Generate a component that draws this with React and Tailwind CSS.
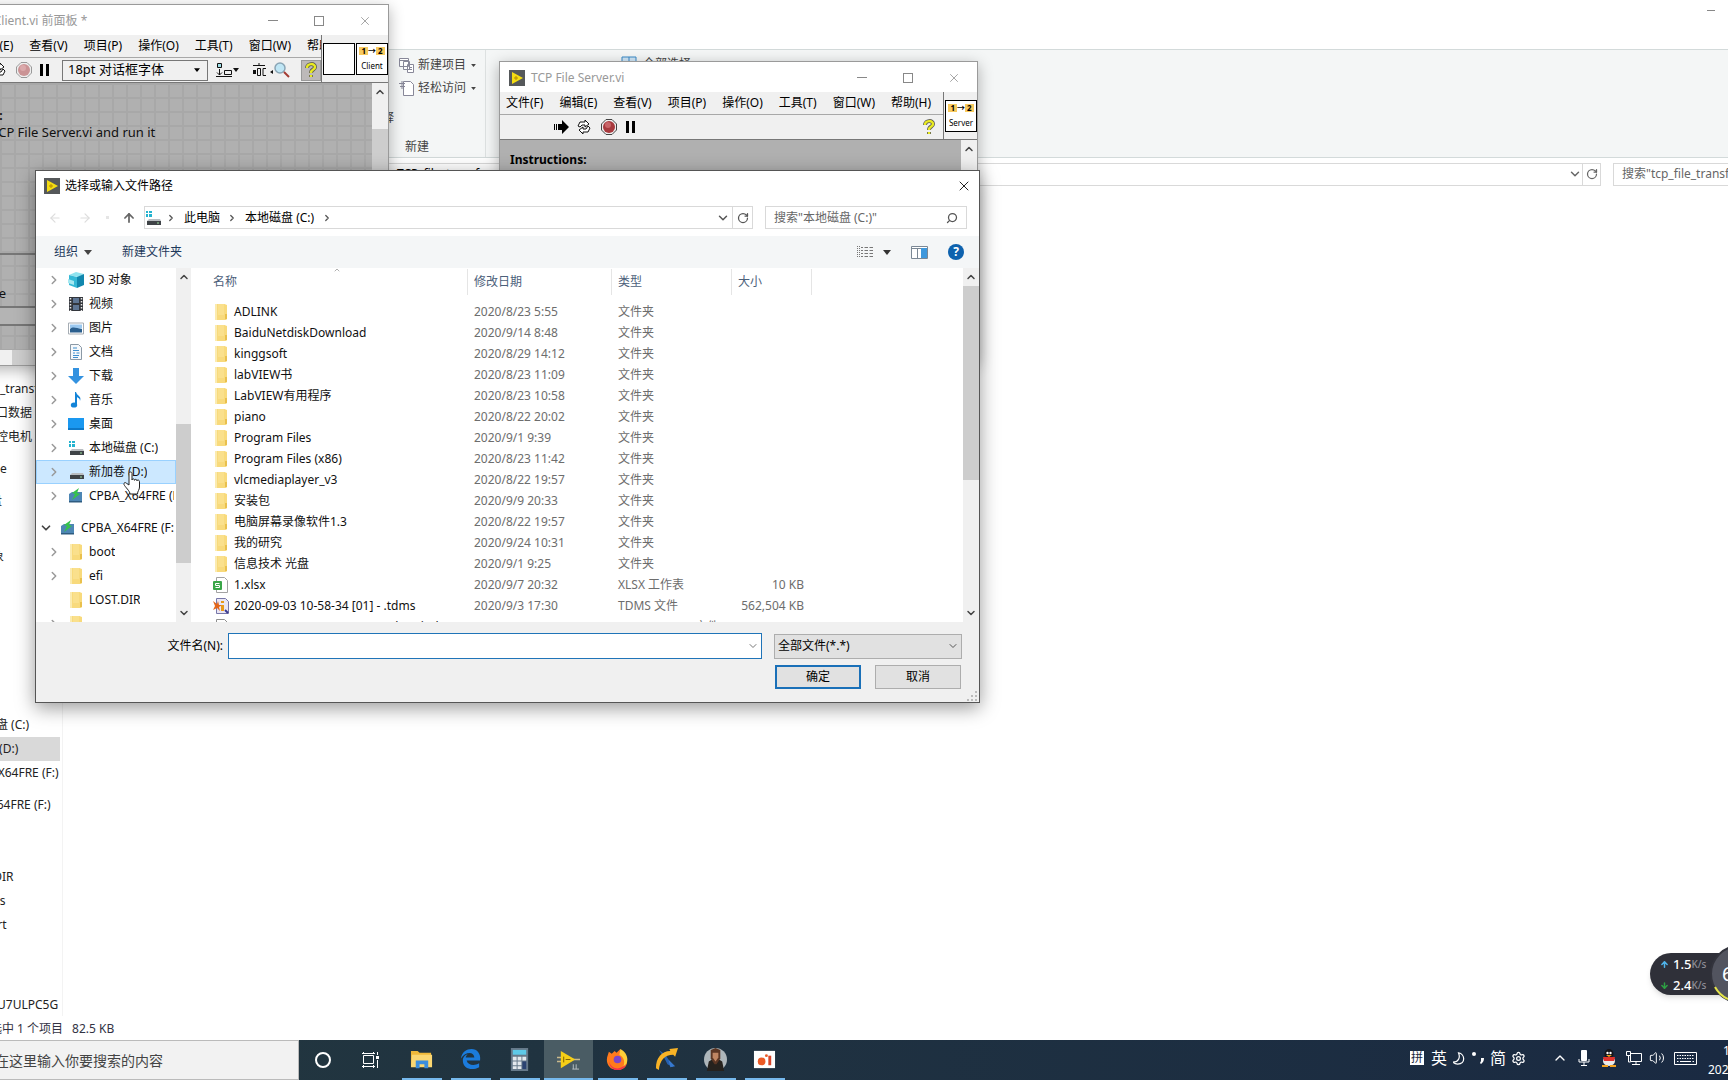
import React, { useState } from "react";
import clsx from "clsx";
import { ArrowLeft, ArrowRight, ArrowUp, ChevronDown, ChevronRight, ChevronUp, RotateCw, Search, Settings, Volume2, X } from "lucide-react";

const treeItems = [
  { label: "3D 对象", icon: "cube" },
  { label: "视频", icon: "video" },
  { label: "图片", icon: "picture" },
  { label: "文档", icon: "document" },
  { label: "下载", icon: "download" },
  { label: "音乐", icon: "music" },
  { label: "桌面", icon: "desktop" },
  { label: "本地磁盘 (C:)", icon: "system" },
  { label: "新加卷 (D:)", icon: "drive", selected: true },
  { label: "CPBA_X64FRE (F:)", icon: "usb" },
  { label: "CPBA_X64FRE (F:)", icon: "usb", root: true },
  { label: "boot", icon: "folder" },
  { label: "efi", icon: "folder" },
  { label: "LOST.DIR", icon: "folder", leaf: true },
  { label: "", icon: "folder" },
];

const files = [
  ["ADLINK", "2020/8/23 5:55"],
  ["BaiduNetdiskDownload", "2020/9/14 8:48"],
  ["kinggsoft", "2020/8/29 14:12"],
  ["labVIEW书", "2020/8/23 11:09"],
  ["LabVIEW有用程序", "2020/8/23 10:58"],
  ["piano", "2020/8/22 20:02"],
  ["Program Files", "2020/9/1 9:39"],
  ["Program Files (x86)", "2020/8/23 11:42"],
  ["vlcmediaplayer_v3", "2020/8/22 19:57"],
  ["安装包", "2020/9/9 20:33"],
  ["电脑屏幕录像软件1.3", "2020/8/22 19:57"],
  ["我的研究", "2020/9/24 10:31"],
  ["信息技术 光盘", "2020/9/1 9:25"],
  ["1.xlsx", "2020/9/7 20:32", "XLSX 工作表", "10 KB", "sheet"],
  ["2020-09-03 10-58-34 [01] - .tdms", "2020/9/3 17:30", "TDMS 文件", "562,504 KB", "tdms"],
  ["2020-09-03 10-58-34 [01] - .tdms_index", "2020/9/3 17:30", "TDMS_INDEX 文件", "1 KB", "file"],
];

const menus = ["文件(F)", "编辑(E)", "查看(V)", "项目(P)", "操作(O)", "工具(T)", "窗口(W)", "帮助(H)"];

function Caret({ className }) {
  return (
    <svg viewBox="0 0 8 5" className={clsx("shrink-0", className)} fill="currentColor" aria-hidden="true">
      <path d="M0 0h8L4 5z" />
    </svg>
  );
}

function Icon({ name }) {
  return (
    <svg viewBox="0 0 16 16" className="h-4 w-4 shrink-0" aria-hidden="true">
      {name === "folder" && (
        <>
          <path d="M2 0h9.500l2.500 1v14l-1 1H2z" fill="#f8da7c" />
          <path d="M2 0h2v16H2z" fill="#fbebb0" />
          <path d="M5 0h6v11H5z" fill="#fae08c" />
          <path d="M12 10h2v5h-2z" fill="#e9c04d" />
        </>
      )}
      {name === "cube" && (
        <>
          <path d="M8 0l8 2-6 3-9-2z" fill="#8fe3ef" />
          <path d="M1 3l8 2v11l-8-3z" fill="#35b9d6" />
          <path d="M9 5l7-3v11l-7 3z" fill="#1187ae" />
          <path d="M0 7l6 2v4l-6-2z" fill="#a5e8f1" />
        </>
      )}
      {name === "video" && (
        <>
          <path d="M1 1h14v14H1z" fill="#33363c" />
          <path d="M5 2h6v5H5zM5 9h6v5H5z" fill="#5f7694" />
          <path d="M2.500 2v13M13.500 2v13" stroke="#e8e8e8" strokeWidth="1.500" strokeDasharray="1.500 1.500" />
        </>
      )}
      {name === "picture" && (
        <>
          <path d="M.5 3h15v11H.5z" fill="#fff" stroke="#a6adb4" />
          <path d="M2 4.500h12v4H2z" fill="#9cc9f0" />
          <path d="M2 9c3-3 6-1 12 0v3.500H2z" fill="#2b5f8e" />
        </>
      )}
      {name === "document" && (
        <>
          <path d="M2.500.5h8l3 3v12h-11z" fill="#f5f8fb" stroke="#8b99a6" />
          <path d="M5 4h4M5 6.500h6M5 9h2M8.500 9h3M5 11.500h6M5 13.500h5" stroke="#3f8fce" />
        </>
      )}
      {name === "download" && <path d="M5 0h6v8h5l-8 8-8-8h5z" fill="#3392e0" />}
      {name === "music" && (
        <>
          <path d="M8 0c1 4 6 4 4 9 0-3-2-3-3-4v8H7V0z" fill="#1384d8" />
          <ellipse cx="6" cy="13" rx="3.200" ry="2.600" fill="#1384d8" />
        </>
      )}
      {name === "desktop" && (
        <>
          <path d="M0 2h16v12H0z" fill="#1a98f0" />
          <path d="M0 12h16v2H0z" fill="#0d78c8" />
        </>
      )}
      {name === "system" && <path d="M1 1h2v2H1zM4 1h3v2H4zM1 4h2v3H1zM4 4h3v3H4z" fill="#24b3cf" />}
      {(name === "system" || name === "drive") && (
        <>
          <path d="M4 9h11l1 2H2z" fill="#b9bdc1" />
          <path d="M2 11h14v4H2z" fill="#3f4347" />
          <path d="M12 13h2" stroke="#9fe3a0" />
        </>
      )}
      {name === "usb" && (
        <>
          <path d="M1 6l3-2h10v10H1z" fill="#4d86b4" />
          <path d="M1 13h13v1.500H1z" fill="#2f5c80" />
          <path d="M11 0L4 5l3 1-3 6 8-6-3-1z" fill="#36c24b" />
        </>
      )}
      {name === "sheet" && (
        <>
          <path d="M3.500.5h8l3 3v12h-11z" fill="#fff" stroke="#a3a3a3" />
          <rect y="4" width="9" height="9" rx="1" fill="#3aa648" />
          <path d="M6.500 6.500h-4v2h4v2h-4" fill="none" stroke="#fff" />
        </>
      )}
      {name === "tdms" && (
        <>
          <path d="M3.500.5h9l3 3v12h-12z" fill="#e9e6f5" stroke="#7777a8" />
          <path d="M0 3l4 3 1-3 1 4h3l-3 2 1 4-3-3-4 2 2-4z" fill="#e3661b" />
          <path d="M8 3h3v2H8zM8 7h3v6H8z" fill="#e89a1b" />
          <path d="M12 12l3 3" stroke="#3a3a90" strokeWidth="2" />
        </>
      )}
      {name === "file" && <path d="M3.500.5h8l3 3v12h-11z" fill="#fff" stroke="#8f8f8f" />}
    </svg>
  );
}

function LabviewLogo() {
  return (
    <svg viewBox="0 0 16 16" className="h-4 w-4 shrink-0" aria-hidden="true">
      <path d="M0 0h16v16H0z" fill="#55585a" />
      <path d="M3 2l11 6-11 6z" fill="#f4dc12" />
      <path d="M5 8h4M7 6v4" stroke="#b58a00" />
    </svg>
  );
}

function RunArrow() {
  return (
    <svg viewBox="0 0 16 14" className="h-[14px] w-4" aria-hidden="true">
      <path d="M.5 4v6M2.500 4v6" stroke="#000" />
      <path d="M4 4h4V0l7 7-7 7v-4H4z" fill="#000" />
    </svg>
  );
}

function RunLoop() {
  return (
    <svg viewBox="0 0 16 16" className="h-4 w-4" fill="#fff" stroke="#111" aria-hidden="true">
      <path d="M2 7l2-4h5V1l4 4-4 3V6H6L4 8z" />
      <path d="M14 9l-2 4H7v2l-4-4 4-3v2h3l2-3z" />
    </svg>
  );
}

function StopIcon({ faded }) {
  return (
    <svg viewBox="0 0 16 16" className={clsx("h-4 w-4", faded && "opacity-50")} aria-hidden="true">
      <path d="M5 .5h6L15.500 5v6L11 15.500H5L.5 11V5z" fill="#eee" stroke="#444" />
      <circle cx="8" cy="8" r="6" fill="#a8393d" />
      <circle cx="7" cy="6" r="3" fill="#c86468" />
    </svg>
  );
}

function PauseIcon() {
  return (
    <svg viewBox="0 0 10 12" className="h-3 w-[10px]" aria-hidden="true">
      <path d="M0 0h3v12H0zM6 0h3v12H6z" fill="#000" />
    </svg>
  );
}

function HelpIcon() {
  return (
    <svg viewBox="0 0 12 16" className="h-4 w-3" fill="none" aria-hidden="true">
      <path d="M2 6c0-5 8-5 8-1 0 3-4 2-4 6M6 13v2" stroke="#555" strokeWidth="4" />
      <path d="M2 6c0-5 8-5 8-1 0 3-4 2-4 6M6 13v2" stroke="#e9ea22" strokeWidth="2.500" />
    </svg>
  );
}

function AlignIcon() {
  return (
    <svg viewBox="0 0 24 14" className="h-[14px] w-6" fill="none" stroke="#111" aria-hidden="true">
      <path d="M1.500.5h4v4h-4z" fill="#9fe0e8" />
      <path d="M3.500 6v6M1 9.500l2.500 2.500L6 9.500M8.500 7.500h7v4h-7zM0 13.500h16" />
      <path d="M17 5h6l-3 4z" fill="#111" stroke="none" />
    </svg>
  );
}

function DistributeIcon() {
  return (
    <svg viewBox="0 0 22 14" className="h-[14px] w-[22px]" fill="none" stroke="#111" aria-hidden="true">
      <path d="M1 2.500h12M7 0v2M5.500 5.500h3v7h-3zM14 5.500h-3v7h3" />
      <path d="M1 7h3v4H1zM18 9l3-2v4z" fill="#111" stroke="none" />
    </svg>
  );
}

function Magnifier() {
  return (
    <svg viewBox="0 0 16 16" className="h-4 w-4" fill="none" aria-hidden="true">
      <circle cx="6" cy="6" r="5" fill="#bfe6f5" stroke="#8aa5b5" strokeWidth="1.500" />
      <path d="M10 10l5 5" stroke="#a33b33" strokeWidth="2" />
    </svg>
  );
}

function ViBadge({ label }) {
  return (
    <div className="flex h-8 w-8 shrink-0 flex-col items-center justify-around border border-black bg-white text-[8px] leading-none text-black">
      <div className="flex items-center font-bold">
        <span className="bg-[#f8ca5e] px-[2px]">1</span>
        <span>→</span>
        <span className="bg-[#f8ca5e] px-[2px]">2</span>
      </div>
      <span>{label}</span>
    </div>
  );
}

function ViWindow({ className, title, toolbar, badges, children }) {
  return (
    <section className={clsx("absolute flex flex-col border border-[#9a9a9a] bg-[#f0f0f0] shadow-[0_4px_14px_rgba(0,0,0,0.3)]", className)}>
      <div className="flex h-[30px] shrink-0 items-center bg-white pt-px pl-[9px] text-[#999]">
        <LabviewLogo />
        <span className="ml-[6px] flex-1 text-xs">{title}</span>
        <button className="flex w-[46px] justify-center" aria-label="最小化">
          <span className="h-px w-[10px] bg-[#888]" />
        </button>
        <button className="flex w-[46px] justify-center" aria-label="最大化">
          <span className="h-[10px] w-[10px] border border-[#888]" />
        </button>
        <button className="flex w-[46px] justify-center" aria-label="关闭">
          <X className="h-[14px] w-[14px]" strokeWidth={1.5} />
        </button>
      </div>
      <div className="flex h-12 shrink-0 border-b border-[#777]">
        <div className="flex min-w-0 flex-1 flex-col overflow-hidden border-r border-[#777]">
          <nav className="flex h-[23px] shrink-0 items-center gap-4 border-b border-[#a8a8a8] pl-[6px] text-black">
            {menus.map((m) => (
              <button key={m} className="shrink-0 whitespace-nowrap">{m}</button>
            ))}
          </nav>
          <div className="flex flex-1 items-center">{toolbar}</div>
        </div>
        <div className="flex items-center gap-px pl-px">{badges}</div>
      </div>
      {children}
    </section>
  );
}

function ClientWindow() {
  return (
    <ViWindow
      className="top-1 -left-[85px] h-[362px] w-[474px]"
      title="TCP File Client.vi 前面板 *"
      toolbar={
        <>
          <button className="ml-[75px]" aria-label="连续运行"><RunLoop /></button>
          <button className="ml-[9px]" aria-label="中止"><StopIcon faded /></button>
          <button className="ml-2" aria-label="暂停"><PauseIcon /></button>
          <div className="relative ml-3 flex items-center">
            <select aria-label="字体" className="h-[21px] w-[146px] appearance-none border border-[#777] bg-[#f0f0f0] pl-[5px] text-[13px]">
              <option>18pt 对话框字体</option>
            </select>
            <Caret className="pointer-events-none absolute right-2 h-1 w-[6px]" />
          </div>
          <button className="ml-2" aria-label="对齐"><AlignIcon /></button>
          <button className="ml-3" aria-label="分布"><DistributeIcon /></button>
          <button aria-label="查找"><Magnifier /></button>
          <button className="ml-auto flex h-[21px] w-5 items-center justify-center border border-[#999] bg-[#bdb9b9]" aria-label="帮助"><HelpIcon /></button>
        </>
      }
      badges={
        <>
          <div className="h-8 w-8 border border-black bg-white" />
          <ViBadge label="Client" />
        </>
      }
    >
      <div className="flex min-h-0 flex-1">
        <div className="flex flex-1 flex-col bg-[#b0b0b0] bg-[linear-gradient(#a8a8a8_2px,transparent_2px),linear-gradient(90deg,#a8a8a8_2px,transparent_2px)] bg-[size:14px_14px] text-[13px] text-[#111]">
          <div className="flex h-[172px] flex-col border-b-2 border-[#777] pt-6 pl-[10px] leading-[17px]">
            <p className="text-xs leading-[17px] font-bold">Instructions:</p>
            <p className="pl-[14px]">1. Open TCP File Server.vi and run it</p>
          </div>
          <div className="flex flex-1 flex-col justify-end gap-1">
            <label htmlFor="client-file" className="pl-[43px]">File size</label>
            <input id="client-file" className="mb-6 h-5 w-full border-y-2 border-[#777] bg-[#b4b4b4]" />
          </div>
          <div className="h-[15px] bg-[#f0f0f0]">
            <div className="ml-24 h-full w-60 bg-[#cdcdcd]" />
          </div>
        </div>
        <div className="flex w-4 flex-col items-center bg-[#f0f0f0]">
          <ChevronUp className="h-[18px] w-3 text-[#444]" strokeWidth={3} />
          <div className="mt-7 h-40 w-full bg-[#cdcdcd]" />
        </div>
      </div>
    </ViWindow>
  );
}

function ServerWindow() {
  return (
    <ViWindow
      className="top-[61px] left-[499px] h-[300px] w-[479px]"
      title="TCP File Server.vi"
      toolbar={
        <>
          <button className="ml-[54px]" aria-label="运行"><RunArrow /></button>
          <button className="ml-[6px]" aria-label="连续运行"><RunLoop /></button>
          <button className="ml-[9px]" aria-label="中止"><StopIcon /></button>
          <button className="ml-[9px]" aria-label="暂停"><PauseIcon /></button>
          <button className="mr-2 ml-auto" aria-label="帮助"><HelpIcon /></button>
        </>
      }
      badges={<ViBadge label="Server" />}
    >
      <div className="flex min-h-0 flex-1">
        <div className="flex-1 bg-[#b0b0b0] pt-[10px] pl-[10px] text-xs leading-5 font-bold text-black">Instructions:</div>
        <div className="flex w-4 flex-col items-center bg-[#f0f0f0]">
          <ChevronUp className="h-[18px] w-3 text-[#444]" strokeWidth={3} />
        </div>
      </div>
    </ViWindow>
  );
}

function ExplorerItem({ children, className }) {
  return <li className={clsx("flex h-6 items-center whitespace-nowrap", className)}>{children}</li>;
}

// Explorer window behind everything, its left part is off the screen
function ExplorerWindow() {
  return (
    <section className="flex min-h-0 flex-1 flex-col bg-white">
      <div className="flex h-[49px] justify-end pt-[10px] pr-[13px]">
        <span className="h-px w-2 bg-[#888]" />
      </div>
      <div className="flex h-[109px] border-y border-[#d3dada] bg-[#f4f6f6] text-[#444]">
        <div className="flex w-[394px] flex-col items-end justify-center pt-7"><span>注释</span></div>
        <div className="flex w-[92px] flex-col gap-[7px] border-r border-[#dde1e1] pt-[7px] pl-[5px]">
          <button className="flex h-4 items-center gap-[3px] whitespace-nowrap">
            <svg viewBox="0 0 16 16" className="h-4 w-4" fill="#fff" stroke="#889" aria-hidden="true">
              <path d="M.5 1.500h9v8h-9zM.5 3.500h9M4.500 4.500h6v8h-6zM8.500 7.500h6v8h-6zM10 10.500h3M10 12.500h3" />
            </svg>
            新建项目
            <Caret className="ml-[2px] h-[3px] w-[5px]" />
          </button>
          <button className="flex h-4 items-center gap-[3px] whitespace-nowrap">
            <svg viewBox="0 0 16 16" className="h-4 w-4" fill="#fff" stroke="#889" aria-hidden="true">
              <path d="M4.500 1.500h7l3 3v11h-10zM0 3.500h6M1 6.500h5M3 1v8" />
            </svg>
            轻松访问
            <Caret className="ml-[2px] h-[3px] w-[5px]" />
          </button>
          <span className="mt-9 pl-[6px]">新建</span>
        </div>
        <div className="flex h-7 items-center gap-[6px] pl-[135px]">
          <svg viewBox="0 0 16 16" className="h-4 w-4" aria-hidden="true">
            <path d="M1 1h14v14H1zM8 1v14M1 8h14" fill="#cfe6f7" stroke="#3a8ac8" />
          </svg>
          全部选择
        </div>
      </div>
      <div className="flex h-8 items-center text-[#666]">
        <div className="flex h-[23px] flex-1 items-center border border-[#d9d9d9] pl-[396px] text-black">
          <span className="flex-1">TCP_file_transf</span>
          <ChevronDown className="h-[14px] w-[14px] text-[#666]" strokeWidth={2.5} />
          <button className="flex h-full w-[18px] items-center justify-center border-l border-[#d9d9d9] text-[#666]" aria-label="刷新">
            <RotateCw className="h-3 w-3" strokeWidth={2.5} />
          </button>
        </div>
        <div className="ml-3 flex h-[23px] w-[115px] items-center overflow-hidden border border-r-0 border-[#d9d9d9] pl-2 whitespace-nowrap">
          搜索"tcp_file_transfer"
        </div>
      </div>
      <div className="flex min-h-0 flex-1">
        <ul className="w-[63px] overflow-hidden border-r border-[#f3f3f3] pt-[187px] text-[#222]">
          <ExplorerItem>_transfer</ExplorerItem>
          <ExplorerItem className="-ml-[4px]">口数据</ExplorerItem>
          <ExplorerItem className="-ml-[4px]">控电机</ExplorerItem>
          <ExplorerItem className="mt-2">e</ExplorerItem>
          <ExplorerItem className="mt-2 -ml-[10px]">盘</ExplorerItem>
          <ExplorerItem className="mt-8 -ml-[8px]">象</ExplorerItem>
          <ExplorerItem className="mt-36 -ml-10">本地磁盘 (C:)</ExplorerItem>
          <ExplorerItem className="mr-[2px] bg-[#d9d9d9]"><span className="-ml-10">新加卷 (D:)</span></ExplorerItem>
          <ExplorerItem className="-ml-[38px]">CPBA_X64FRE (F:)</ExplorerItem>
          <ExplorerItem className="mt-2 -ml-[46px]">CPBA_X64FRE (F:)</ExplorerItem>
          <ExplorerItem className="mt-12 -ml-[38px]">LOST.DIR</ExplorerItem>
          <ExplorerItem className="-ml-[38px]">sources</ExplorerItem>
          <ExplorerItem className="-ml-[38px]">support</ExplorerItem>
          <ExplorerItem className="mt-14 -ml-[3px]">U7ULPC5G</ExplorerItem>
        </ul>
      </div>
      <div className="-ml-[10px] flex h-6 items-center gap-[9px] pt-[2px] text-[#334]">
        <span>选中 1 个项目</span>
        <span>82.5 KB</span>
      </div>
    </section>
  );
}

function TreeRow({ item }) {
  return (
    <li
      className={clsx(
        "flex h-6 items-center border whitespace-nowrap text-[#111]",
        item.selected ? "border-[#99d1ff] bg-[#cce8ff]" : "border-transparent",
        item.root ? "mt-2 pl-px" : "pl-[9px]"
      )}
    >
      <span className="flex w-4 shrink-0 justify-center text-[#999]">
        {item.root ? <ChevronDown className="h-[14px] w-[14px] text-[#444]" strokeWidth={3} /> : !item.leaf && <ChevronRight className="h-[14px] w-[14px]" strokeWidth={2.5} />}
      </span>
      <span className="ml-[6px] flex"><Icon name={item.icon} /></span>
      <span className="mr-px ml-[5px] min-w-0 overflow-hidden">{item.label}</span>
    </li>
  );
}

function FileDialog() {
  const [fileName, setFileName] = useState("");

  return (
    <section className="absolute top-[170px] left-[35px] flex w-[945px] flex-col border border-[#555] bg-white shadow-[0_5px_18px_rgba(0,0,0,0.4)]">
      <div className="flex h-7 items-center pt-px pl-2 text-black">
        <LabviewLogo />
        <h1 className="ml-[5px] flex-1">选择或输入文件路径</h1>
        <button className="flex w-[31px] justify-center" aria-label="关闭">
          <X className="h-4 w-4" strokeWidth={1.3} />
        </button>
      </div>

      {/* Address bar */}
      <div className="flex h-[37px] items-center pr-3 text-[#555]">
        <button className="ml-3" aria-label="后退"><ArrowLeft className="h-[14px] w-[14px] text-[#ddd]" /></button>
        <button className="ml-4" aria-label="前进"><ArrowRight className="h-[14px] w-[14px] text-[#ddd]" /></button>
        <span className="ml-[14px] h-[3px] w-[3px] bg-[#e5e5e5]" />
        <button className="ml-[13px]" aria-label="上移"><ArrowUp className="h-[14px] w-[14px] text-[#666]" strokeWidth={3} /></button>
        <div className="ml-2 flex h-[23px] flex-1 items-center border border-[#d9d9d9] text-black">
          <span className="flex"><Icon name="system" /></span>
          <ChevronRight className="ml-[5px] h-[10px] w-[10px] text-[#555]" strokeWidth={3} />
          <span className="ml-2">此电脑</span>
          <ChevronRight className="ml-[7px] h-[10px] w-[10px] text-[#555]" strokeWidth={3} />
          <span className="ml-2">本地磁盘 (C:)</span>
          <ChevronRight className="ml-2 h-[10px] w-[10px] text-[#555]" strokeWidth={3} />
          <ChevronDown className="mr-[2px] ml-auto h-[14px] w-[14px] text-[#555]" strokeWidth={2.5} />
          <button className="flex h-full w-5 items-center justify-center border-l border-[#d9d9d9] text-[#555]" aria-label="刷新">
            <RotateCw className="h-3 w-3" strokeWidth={2.5} />
          </button>
        </div>
        <div className="ml-3 flex h-[23px] w-[202px] items-center border border-[#d9d9d9] pr-2 pl-2">
          <input aria-label="搜索" placeholder={'搜索"本地磁盘 (C:)"'} className="min-w-0 flex-1 outline-none placeholder:text-[#666]" />
          <Search className="h-3 w-3 -scale-x-100" strokeWidth={2.5} />
        </div>
      </div>

      {/* Command bar */}
      <div className="flex h-8 items-center bg-[#f4f6f7] pr-[15px] pl-[18px] text-[#1e395b]">
        <button className="flex items-center gap-[6px]">组织 <Caret className="h-[5px] w-2 text-[#444]" /></button>
        <button className="ml-[30px]">新建文件夹</button>
        <button className="ml-auto flex items-center gap-[10px]" aria-label="更改视图">
          <svg viewBox="0 0 16 12" className="h-3 w-4" stroke="#777" aria-hidden="true">
            <path d="M.5 0v12M2.500 0v12" strokeDasharray="1 1" />
            <path d="M4 1.500h2M7.500 1.500h3.500M12.500 1.500H16M4 4.500h2M7.500 4.500h3.500M12.500 4.500H16M4 7.500h2M7.500 7.500h3.500M12.500 7.500H16M4 10.500h2M7.500 10.500h3.500M12.500 10.500H16" />
          </svg>
          <Caret className="h-[5px] w-2 text-[#333]" />
        </button>
        <button className="ml-5" aria-label="预览窗格">
          <svg viewBox="0 0 17 13" className="h-[13px] w-[17px]" aria-hidden="true">
            <path d="M.5.5h16v12H.5zM.5 2.500h16M6.500 2v10" fill="#fff" stroke="#7b8895" />
            <path d="M10 2h6v10h-6z" fill="#3f98dc" />
          </svg>
        </button>
        <button className="ml-5 flex h-4 w-4 items-center justify-center rounded-full bg-[#0e62ae] font-bold text-white" aria-label="帮助">?</button>
      </div>

      <div className="flex h-[354px]">
        <ul className="w-[140px] overflow-hidden">
          {treeItems.map((item, i) => (
            <TreeRow key={i} item={item} />
          ))}
        </ul>
        <div className="flex w-[15px] flex-col items-center bg-[#f0f0f0]">
          <ChevronUp className="h-[18px] w-3 text-[#444]" strokeWidth={3} />
          <div className="mt-[138px] h-[139px] w-full bg-[#cdcdcd]" />
          <ChevronDown className="mt-auto h-[18px] w-3 text-[#444]" strokeWidth={3} />
        </div>
        <div className="relative ml-[14px] flex-1 overflow-hidden pt-px">
          <ChevronUp className="absolute -top-[2px] left-[127px] h-2 w-[10px] text-[#888]" />
          <table className="table-fixed border-collapse whitespace-nowrap text-[#6d6d6d]">
            <thead>
              <tr className="h-8 text-left align-top text-[#4c607a]">
                <th className="w-[263px] p-0 font-normal"><div className="h-[26px] border-r border-[#e5e5e5] pl-2 leading-[26px]">名称</div></th>
                <th className="w-36 p-0 font-normal"><div className="h-[26px] border-r border-[#e5e5e5] pl-[6px] leading-[26px]">修改日期</div></th>
                <th className="w-[120px] p-0 font-normal"><div className="h-[26px] border-r border-[#e5e5e5] pl-[6px] leading-[26px]">类型</div></th>
                <th className="w-20 p-0 font-normal"><div className="h-[26px] border-r border-[#e5e5e5] pl-[6px] leading-[26px]">大小</div></th>
              </tr>
            </thead>
            <tbody>
              {files.map(([name, date, type = "文件夹", size = "", icon = "folder"]) => (
                <tr key={name} className="h-[21px]">
                  <td className="p-0 pl-2">
                    <div className="flex items-center gap-[5px] text-[#111]"><Icon name={icon} />{name}</div>
                  </td>
                  <td className="p-0 pl-[6px]">{date}</td>
                  <td className="p-0 pl-[6px]">{type}</td>
                  <td className="p-0 pr-2 text-right">{size}</td>
                </tr>
              ))}
            </tbody>
          </table>
        </div>
        <div className="flex w-4 flex-col items-center bg-[#f0f0f0]">
          <ChevronUp className="h-[18px] w-3 text-[#444]" strokeWidth={3} />
          <div className="h-[194px] w-full bg-[#cdcdcd]" />
          <ChevronDown className="mt-auto h-[18px] w-3 text-[#444]" strokeWidth={3} />
        </div>
      </div>

      <form className="flex h-20 flex-col gap-[6px] bg-[#f0f0f0] pt-[11px] pr-[17px] text-black" onSubmit={(e) => e.preventDefault()}>
        <div className="flex h-[26px] items-center">
          <label htmlFor="file-name" className="w-[187px] text-right">文件名(N):</label>
          <div className="relative ml-[5px] flex h-full flex-1 items-center">
            <input
              id="file-name"
              value={fileName}
              onChange={(e) => setFileName(e.target.value)}
              className="h-full w-full border border-[#1f74b8] bg-white px-1 outline-none"
            />
            <ChevronDown className="absolute right-[3px] h-3 w-3 text-[#777]" />
          </div>
          <div className="relative ml-3 flex items-center">
            <select aria-label="文件类型" className="h-[25px] w-[188px] appearance-none border border-[#adadad] bg-[#e1e1e1] pl-[3px]">
              <option>全部文件(*.*)</option>
            </select>
            <ChevronDown className="pointer-events-none absolute right-[3px] h-3 w-3 text-[#555]" />
          </div>
        </div>
        <div className="flex justify-end gap-[14px] pr-px">
          <button type="submit" className="h-6 w-[86px] border-2 border-[#1a70b8] bg-[#e1e1e1]">确定</button>
          <button type="button" className="h-6 w-[86px] border border-[#adadad] bg-[#e1e1e1]">取消</button>
        </div>
        <svg viewBox="0 0 12 12" className="absolute right-0 bottom-0 h-3 w-3" fill="#bbb" aria-hidden="true">
          <path d="M8 1h2v2H8zM8 5h2v2H8zM4 5h2v2H4zM8 9h2v2H8zM4 9h2v2H4zM0 9h2v2H0z" />
        </svg>
      </form>
    </section>
  );
}

function SpeedWidget() {
  return (
    <aside className="absolute top-[945px] right-0 flex h-[58px] items-center">
      <div className="flex h-[42px] w-[78px] flex-col justify-center rounded-l-full bg-[#2f3039] pt-px pl-[10px] text-[13px] leading-[21px] font-medium text-white shadow-md">
        <div className="flex items-center">
          <ArrowUp className="mr-1 h-[9px] w-[9px] text-[#4fb3ea]" strokeWidth={4} />
          1.5<span className="text-[10px] text-[#8d8d96]">K/s</span>
        </div>
        <div className="flex items-center">
          <ArrowUp className="mr-1 h-[9px] w-[9px] rotate-180 text-[#2ea043]" strokeWidth={4} />
          2.4<span className="text-[10px] text-[#8d8d96]">K/s</span>
        </div>
      </div>
      <div className="absolute left-[60px] h-[58px] w-[18px] overflow-hidden">
        <svg viewBox="0 0 18 58" className="h-[58px] w-[18px]" aria-hidden="true">
          <circle cx="29" cy="29" r="28" fill="#52545f" stroke="#33343d" strokeWidth="2" />
          <path d="M5 42a27 27 0 0 0 13 12" fill="none" stroke="#e3e34a" strokeWidth="2" />
        </svg>
        <span className="absolute top-[15px] left-3 text-xl leading-7 text-white">6</span>
      </div>
    </aside>
  );
}

const taskApps = [
  {
    name: "文件资源管理器",
    art: (
      <>
        <path d="M1 3h7l2 2h12v14H1z" fill="#f0b93a" />
        <path d="M2 7h21v13H1z" fill="#fbd772" />
        <path d="M6 13h13v8h-4v-4h-5v4H6z" fill="#3b8ede" />
      </>
    ),
  },
  {
    name: "Edge",
    art: <path d="M2 11C3 4 8 1 13 1c6 0 10 5 9 12H8c1 5 8 6 13 3v4c-7 4-17 2-17-7 0-4 3-6 6-7-2 1-3 3-3 4h9c0-6-9-7-14 1z" fill="#1b7bdc" />,
  },
  {
    name: "计算器",
    art: (
      <>
        <path d="M3 0h18v24H3z" fill="#66798a" />
        <path d="M5 2h14v5H5z" fill="#5ec9e8" />
        <path d="M5 9h4v4H5zM10 9h4v4h-4zM15 9h4v4h-4zM5 14h4v4H5zM10 14h4v4h-4zM5 19h4v3H5zM10 19h4v3h-4z" fill="#e4e9ee" />
        <path d="M15 14h4v8h-4z" fill="#2b4372" />
      </>
    ),
  },
  {
    name: "LabVIEW",
    active: true,
    art: (
      <>
        <path d="M0 10h6M0 14h6M16 12h8" stroke="#c9b98c" strokeWidth="1.500" />
        <path d="M4 3l15 9-15 9z" fill="#f7cf16" />
        <path d="M9 12h5M7 9v6" stroke="#7d5e00" />
        <path d="M17 17v5M20 17v5M16 22h7" stroke="#b9bfc2" />
      </>
    ),
  },
  {
    name: "Firefox",
    art: (
      <>
        <path d="M2 7l1-3 3 2 3-3 2 2 4-4 1 4c9 4 8 18-4 18C2 23-1 14 2 7z" fill="#ff7a1c" />
        <path d="M15 1c8 4 10 14 3 19 2-6 1-10-4-13z" fill="#ffcf38" />
        <path d="M3 14c3 8 11 10 18 3-3 8-16 9-18-3z" fill="#f0304f" />
        <circle cx="12" cy="12" r="4" fill="#7b45c9" />
      </>
    ),
  },
  {
    name: "飞秋",
    art: (
      <>
        <path d="M4 2l7 5 8 13-6-3-3-6z" fill="#2661b0" />
        <path d="M14 12l7 7-5 1z" fill="#3679d0" />
        <path d="M1 21C1 10 7 3 16 3l-1-2 9-1-3 9-2-2C10 7 5 13 4 23z" fill="#f8b326" />
      </>
    ),
  },
  {
    name: "照片",
    art: (
      <>
        <circle cx="12" cy="12" r="12" fill="#aeb6ba" />
        <path d="M3 24l2-10 5-3h4l5 3 2 10z" fill="#26221e" />
        <path d="M7 2l5-2 5 2v9l-4 6h-2l-4-6z" fill="#5b3624" />
        <path d="M9 5h6v5l-3 4-3-4z" fill="#c08562" />
      </>
    ),
  },
  {
    name: "录屏",
    art: (
      <>
        <path d="M1 3h22v18H1z" fill="#fff" />
        <circle cx="9" cy="14" r="4" fill="#ec5b26" />
        <circle cx="14" cy="8" r="1.500" fill="#ec5b26" />
        <path d="M16 8h3v10h-3z" fill="#d8452b" />
      </>
    ),
  },
];

function Taskbar() {
  return (
    <footer className="flex h-10 shrink-0 items-center overflow-hidden bg-linear-to-r from-[#23373f] to-[#1a2a42] text-white">
      <input
        aria-label="搜索"
        placeholder="在这里输入你要搜索的内容"
        className="-ml-12 h-full w-[347px] shrink-0 border border-[#bbb] bg-[#f2f2f2] pl-[42px] text-sm outline-none placeholder:text-[#444]"
      />
      <button className="flex w-12 justify-center" aria-label="Cortana">
        <span className="h-4 w-4 rounded-full border-2 border-white" />
      </button>
      <button className="mr-[2px] flex w-12 justify-center" aria-label="任务视图">
        <svg viewBox="0 0 18 16" className="h-4 w-[18px]" fill="none" stroke="#fff" aria-hidden="true">
          <path d="M1.500 3.500h10v8h-10zM1.500 0v2M11.500 0v2M1.500 13v3M11.500 13v3M0 1.500h13M0 14.500h13M15.500 0v3M15.500 8v8" />
          <path d="M14 4h3v3h-3z" fill="#fff" stroke="none" />
        </svg>
      </button>
      {taskApps.map((app) => (
        <button
          key={app.name}
          aria-label={app.name}
          className={clsx("flex h-full w-[49px] flex-col items-center justify-between pt-2", app.active && "bg-[#4a5c64]")}
        >
          <svg viewBox="0 0 24 24" className="h-[23px] w-[23px]" aria-hidden="true">{app.art}</svg>
          <span className={clsx("h-[2px] bg-[#76b9ed]", app.active ? "w-full" : "w-10")} />
        </button>
      ))}

      {/* Input method and tray */}
      <div className="ml-auto flex shrink-0 items-center pb-1">
        <span className="flex h-[14px] w-[14px] items-center justify-center bg-white text-xs leading-none text-[#1a2a42]">拼</span>
        <span className="ml-[7px] text-base leading-5">英</span>
        <svg viewBox="0 0 14 14" className="ml-[6px] h-[13px] w-[13px]" fill="none" stroke="#fff" strokeWidth="1.300" aria-hidden="true">
          <path d="M6 1c7 1 8 12-1 12-2 0-4-1-5-2 6 0 8-5 6-10z" />
        </svg>
        <svg viewBox="0 0 14 14" className="ml-[5px] h-[14px] w-[14px]" fill="#fff" aria-hidden="true">
          <circle cx="3" cy="3" r="2" />
          <path d="M10 7h3c0 3-1 4-3 6l-1-1 1-2z" />
        </svg>
        <span className="ml-[5px] text-base leading-5">简</span>
        <Settings className="ml-[5px] h-[15px] w-[15px]" strokeWidth={2} />
        <ChevronUp className="ml-[26px] h-4 w-4" strokeWidth={2} />
        <svg viewBox="0 0 12 16" className="ml-[10px] h-4 w-3" aria-hidden="true">
          <rect x="3" y="0" width="6" height="11" rx="1" fill="#fff" />
          <path d="M1 9v3h10V9M6 12v3M3 15.500h6" fill="none" stroke="#fff" />
        </svg>
        <svg viewBox="0 0 16 18" className="ml-[11px] h-[18px] w-4" aria-hidden="true">
          <ellipse cx="8" cy="12" rx="6" ry="5" fill="#e9e9e9" />
          <ellipse cx="8" cy="5" rx="4.500" ry="5" fill="#15151a" />
          <path d="M2 8h12l-1 4H3z" fill="#e2322c" />
          <circle cx="6.500" cy="4" r="1.200" fill="#fff" />
          <circle cx="9.500" cy="4" r="1.200" fill="#fff" />
          <path d="M5 6h6l-3 2zM1 16h6v2H1zM9 16h6v2H9z" fill="#f5a21e" />
        </svg>
        <svg viewBox="0 0 16 14" className="ml-[9px] h-[14px] w-4" fill="none" stroke="#fff" aria-hidden="true">
          <path d="M4.500 2.500h11v8h-11zM10 11v2M6 13.500h8M.5.5h4v4h-4zM2.500 5v6h2" />
        </svg>
        <Volume2 className="ml-[7px] h-4 w-4" strokeWidth={1.5} />
        <svg viewBox="0 0 23 13" className="ml-[9px] h-[13px] w-[23px]" fill="none" stroke="#fff" aria-hidden="true">
          <path d="M.5.5h22v12H.5z" />
          <path d="M3 3.500h17M3 6.500h17" strokeDasharray="1.500 1" />
          <path d="M6 9.500h11M3 9.500h1.500M18.500 9.500H20" />
        </svg>
      </div>
      <div className="ml-[11px] w-5 shrink-0 text-xs leading-[19px] whitespace-nowrap">
        <div className="pl-[15px]">15:30</div>
        <div>2020/9/24</div>
      </div>
    </footer>
  );
}

export default function App() {
  return (
    <main className="relative flex h-screen flex-col overflow-hidden bg-white font-['Noto_Sans','Noto_Sans_CJK_SC',sans-serif] text-xs">
      <ExplorerWindow />
      <Taskbar />
      <ClientWindow />
      <ServerWindow />
      <FileDialog />
      <SpeedWidget />

      {/* Hand pointer */}
      <svg viewBox="0 0 18 24" className="absolute top-[471px] left-[123px] h-6 w-[18px]" aria-hidden="true">
        <path d="M6 14V2.500c0-2 3-2 3 0V9c0-1.500 2.500-1.500 2.500.3 0-1.300 2.500-1.300 2.500.5 0-1.200 2.500-1 2.500.8V16c0 3-2 4-2 7H7c0-3-5-7-6-9.500-.6-1.800 1.500-2.500 2.500-1.200z" fill="#fff" stroke="#222" />
      </svg>
    </main>
  );
}
